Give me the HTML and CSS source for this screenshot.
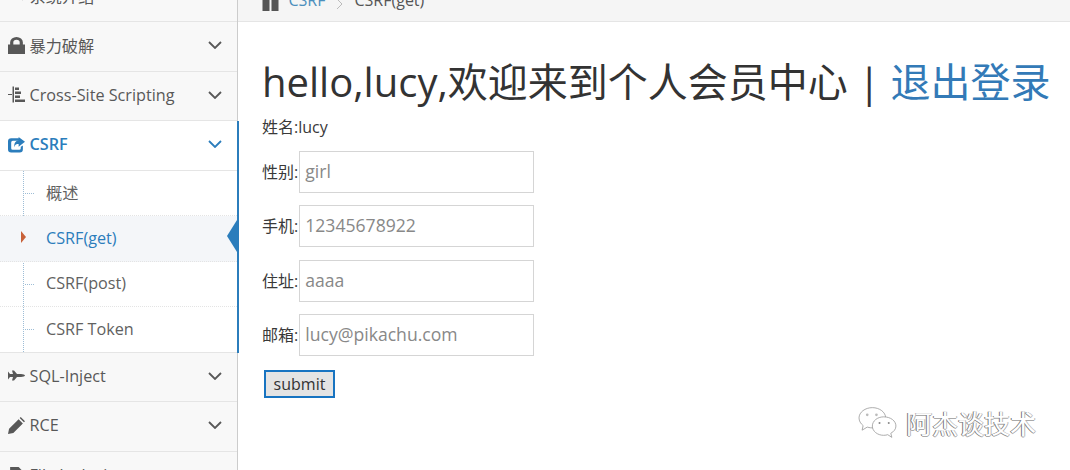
FILE: index.html
```html
<!DOCTYPE html>
<html lang="zh">
<head>
<meta charset="utf-8">
<title>CSRF(get)</title>
<link rel="stylesheet" href="styles.css">
</head>
<body>
<div class="page">
  <nav class="sidebar">
    <div class="item">
      <svg class="ico" viewBox="0 0 16 16"><path d="M2 8l5-5v3c4 0 7 2 7 7-1-3-3-4-7-4v3z"/></svg>
      <span class="label">系统介绍</span>
    </div>
    <div class="item">
      <svg class="ico" viewBox="0 0 16 16"><path d="M0 7h2V5a6 5 0 0 1 12 0v2h2v9H0zM5 7h6V5a3 2.500 0 0 0-6 0z"/></svg>
      <span class="label">暴力破解</span>
      <svg class="chev" viewBox="0 0 14 8"><path d="M1 1l6 6 6-6"/></svg>
    </div>
    <div class="item">
      <svg class="ico" viewBox="0 0 17 16"><path d="M4.500 0h1.500v16H4.500zM7 1h4v2.500H7zM7 5h6v2.500H7zM7 9h5v2.500H7zM7 13h10v2.500H7zM0 7.500h4v1H0z"/></svg>
      <span class="label">Cross-Site Scripting</span>
      <svg class="chev" viewBox="0 0 14 8"><path d="M1 1l6 6 6-6"/></svg>
    </div>
    <div class="group">
      <div class="item open">
        <svg class="ico" viewBox="0 0 16 16"><path d="M4 2h7v2.500H4.500A1.500 1.500 0 0 0 3 6v5.500A1.500 1.500 0 0 0 4.500 13h6a1.500 1.500 0 0 0 1.500-1.500V10l2-1v3.500a3 3 0 0 1-3 3H3a3 3 0 0 1-3-3V5a3 3 0 0 1 3-3z"/><path d="M10 1l6 4.500-6 4.500V7.500C8 7.500 6.500 8 6 10.500 5.500 7 7 4.500 10 4z"/></svg>
        <span class="label">CSRF</span>
        <svg class="chev" viewBox="0 0 14 8"><path d="M1 1l6 6 6-6"/></svg>
      </div>
      <ul class="sub">
        <li class="sub-item"><span>概述</span></li>
        <li class="sub-item active"><span>CSRF(get)</span></li>
        <li class="sub-item"><span>CSRF(post)</span></li>
        <li class="sub-item"><span>CSRF Token</span></li>
      </ul>
    </div>
    <div class="item">
      <svg class="ico" viewBox="0 0 17 16"><path d="M0 4l2 2.500h3L4 3h2l3 3.500h4c2 0 4 1 4 1.500s-2 1.500-4 1.500H9L6 13H4l1-3.500H2L0 12z"/></svg>
      <span class="label">SQL-Inject</span>
      <svg class="chev" viewBox="0 0 14 8"><path d="M1 1l6 6 6-6"/></svg>
    </div>
    <div class="item">
      <svg class="ico" viewBox="0 0 16 16"><path d="M0 16l1-5 9-9 4 4-9 9zM11 1l1-1 4 4-1 1z"/></svg>
      <span class="label">RCE</span>
      <svg class="chev" viewBox="0 0 14 8"><path d="M1 1l6 6 6-6"/></svg>
    </div>
    <div class="item">
      <svg class="ico" viewBox="0 0 16 16"><path d="M2 1h8l4 4v10H2z"/></svg>
      <span class="label">File Inclusion</span>
      <svg class="chev" viewBox="0 0 14 8"><path d="M1 1l6 6 6-6"/></svg>
    </div>
  </nav>
  <main class="main">
    <div class="crumbs">
      <svg class="home" viewBox="0 0 16 14"><path d="M0 0h7v14H0zM9 0h7v14H9z"/></svg>
      <a class="crumb-link">CSRF</a>
      <svg class="crumb-sep" viewBox="0 0 8 12"><path d="M1 1l5 5-5 5"/></svg>
      <span>CSRF(get)</span>
    </div>
    <div class="content">
      <h2 class="title">hello,lucy,欢迎来到个人会员中心 | <a class="logout">退出登录</a></h2>
      <p class="name">姓名:lucy</p>
      <form class="form">
        <label class="row">性别:<input class="field" type="text" placeholder="girl"></label>
        <label class="row">手机:<input class="field" type="text" placeholder="12345678922"></label>
        <label class="row">住址:<input class="field" type="text" placeholder="aaaa"></label>
        <label class="row">邮箱:<input class="field" type="text" placeholder="lucy@pikachu.com"></label>
        <button class="submit" type="button">submit</button>
      </form>
    </div>
    <div class="mark">
      <svg class="wechat" viewBox="0 0 40 34"><g fill="#fff" stroke="#9a9a9a" stroke-width=".8"><path d="M14 2C7 2 1 6.500 1 12c0 3 1.500 5.500 4 7.500L4 24l5-3c2 .7 4 .8 6 .8C21 22 27 17.500 27 12S21 2 14 2z"/><path d="M25 11c-6 0-11 4-11 9s5 9 11 9c1.500 0 3-.2 4-.6l4 2.600-1-4c3-1.600 5-4 5-7 0-5-5-9-12-9z"/></g><circle cx="9" cy="9" r="1.300" fill="#bbb"/><circle cx="18" cy="9" r="1.300" fill="#bbb"/><circle cx="21" cy="17" r="1" fill="#888"/><circle cx="30" cy="17" r="1" fill="#888"/></svg>
      <span class="mark-text">阿杰谈技术</span>
    </div>
  </main>
</div>
</body>
</html>
```
FILE: styles.css
```css
* { box-sizing: border-box; }
html, body { margin: 0; height: 470px; overflow: hidden; background: #fff; }
body { font-family: "Open Sans", "Noto Sans CJK SC", sans-serif; color: #393939; font-size: 16px; }
.page { display: flex; height: 470px; }

.sidebar { width: 238px; flex: none; margin-top: -27.500px; background: #f8f8f8; border-right: 1px solid #ccc; }
.item { height: 49.500px; display: flex; align-items: center; padding: 0 15px 2px 8px; background: #f8f8f8; border-bottom: 1px solid #e5e5e5; color: #585858; font-size: 16.200px; }
.ico { width: 17px; height: 17px; fill: #585858; flex: none; margin-right: 4.500px; }
.label { flex: 1; white-space: nowrap; }
.chev { width: 14px; height: 8px; fill: none; stroke: #585858; stroke-width: 1.800; flex: none; }

.group { margin-right: -2px; background: #fff; border-right: 2px solid #2b7dbc; }
.item.open { background: #fff; color: #2b7dbc; font-weight: 600; padding-right: 15px; }
.item.open .ico { fill: #2b7dbc; }
.item.open .chev { stroke: #2b7dbc; }

.sub { list-style: none; margin: 0; padding: 0; height: 182px; background: #fff; border-bottom: 1px solid #e5e5e5; position: relative; }
.sub::before { content: ""; position: absolute; left: 23px; top: 0; bottom: 0; border-left: 1px dotted #9dbdd6; }
.sub-item { height: 45.500px; display: flex; align-items: center; padding: 0 0 1px 46px; color: #616161; font-size: 16.200px; position: relative; border-bottom: 1px dotted #e4e4e4; }
.sub-item:last-child { border-bottom: 0; }
.sub-item::before { content: ""; position: absolute; left: 25px; top: 22px; width: 9px; border-top: 1px dotted #9dbdd6; }
.sub-item.active { background: #f4f6f9; color: #2b7dbc; }
.sub-item.active::before { left: 21px; top: 15px; width: 0; border-top: 6px solid transparent; border-bottom: 6px solid transparent; border-left: 5px solid #c86139; }
.sub-item.active::after { content: ""; position: absolute; right: 0; top: 3.500px; border-top: 16px solid transparent; border-bottom: 16px solid transparent; border-right: 10px solid #2b7dbc; }

.main { flex: 1; min-width: 0; position: relative; }
.crumbs { height: 22px; display: flex; align-items: flex-end; gap: 9.500px; padding: 0 0 11px 24px; background: #f5f5f5; border-bottom: 1px solid #e5e5e5; color: #555; font-size: 16px; line-height: 20px; overflow: hidden; }
.home { width: 17px; height: 14px; fill: #555; flex: none; margin-bottom: -1px; }
.crumb-link { color: #4c8fbd; }
.crumb-sep { width: 8px; height: 12px; fill: none; stroke: #bbb; stroke-width: 1; flex: none; margin: 0 1px; }

.content { padding: 0 0 0 25px; }
.title { margin: 30px 0 0 -1px; font-size: 40px; font-weight: 400; line-height: 60px; color: #333; white-space: nowrap; }
.logout { color: #337ab7; }
.name { margin: 3px 0 0 -1px; line-height: 24px; font-size: 16px; }
.row { display: flex; align-items: center; height: 42px; margin: 12.300px 0 0 -1px; font-size: 16px; line-height: 20px; }
.row:first-child { margin-top: 12px; }
.field { width: 235px; height: 42px; padding: 0 5px 2px; margin-left: 1px; border: 1px solid #d5d5d5; background: #fff; font: 17.600px "Open Sans", sans-serif; color: #888; }
.field::placeholder { color: #888; opacity: 1; }
.submit { display: block; width: 71px; height: 28px; margin: 14px 0 0 1px; padding: 0; border: 2px solid #1874c1; background: #e4e4e4; color: #333; font: 16px "Open Sans", sans-serif; }

.mark { position: absolute; right: 34px; top: 404px; display: flex; align-items: center; gap: 7px; }
.wechat { width: 41px; height: 36px; }
.mark-text { font-size: 26px; color: #fff; font-family: "Noto Sans CJK SC", sans-serif; text-shadow: -1px 0 #777, 0 1px #aaa, 1px 0 #bbb; }
```
